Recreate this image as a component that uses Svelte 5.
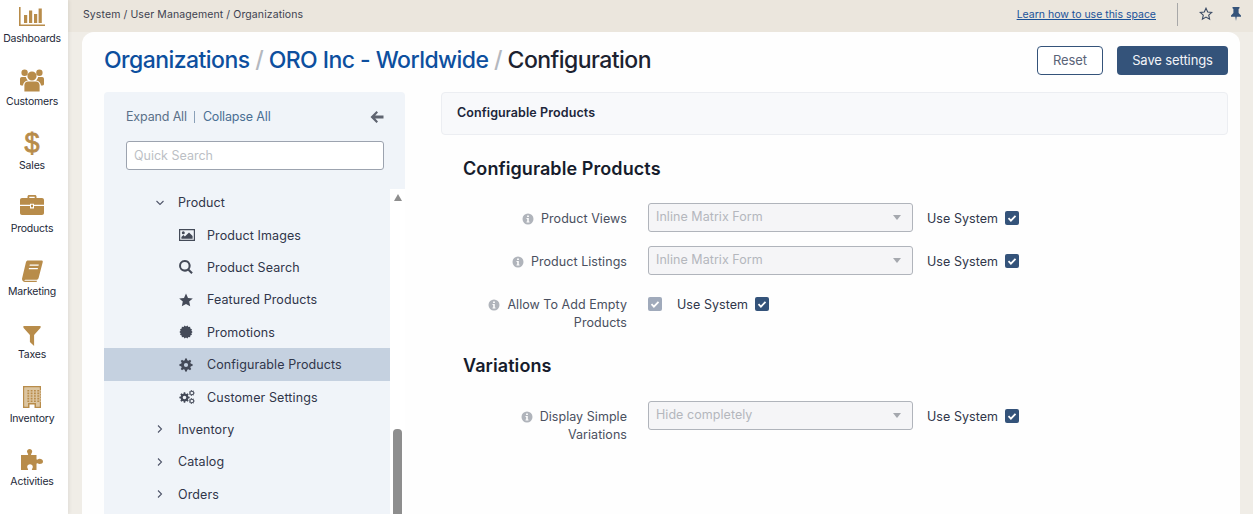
<script>
  function gear(cx, cy, r, n, hole) {
    const inner = r * 0.76;
    let d = '';
    for (let i = 0; i < n; i++) {
      const a = (i / n) * Math.PI * 2;
      const s = Math.PI / n;
      const pts = [[inner, a - s * 0.62], [r, a - s * 0.36], [r, a + s * 0.36], [inner, a + s * 0.62]];
      for (const [rad, ang] of pts) {
        d += (d === '' ? 'M' : 'L') + (cx + rad * Math.cos(ang)).toFixed(2) + ' ' + (cy + rad * Math.sin(ang)).toFixed(2);
      }
    }
    d += 'Z';
    d += `M${cx - hole} ${cy}a${hole} ${hole} 0 1 0 ${hole * 2} 0a${hole} ${hole} 0 1 0 ${-hole * 2} 0Z`;
    return d;
  }

  function burst(cx, cy, r, n) {
    let d = '';
    for (let i = 0; i < n * 2; i++) {
      const a = (i / (n * 2)) * Math.PI * 2;
      const rad = i % 2 ? r * 0.84 : r;
      d += (i ? 'L' : 'M') + (cx + rad * Math.cos(a)).toFixed(2) + ' ' + (cy + rad * Math.sin(a)).toFixed(2);
    }
    return d + 'Z';
  }

  let windows = '';
  for (let y = 4; y < 15; y += 2.6) {
    for (let x = 4.4; x < 18; x += 3.3) {
      windows += `M${x} ${y}h1.8v1.6h-1.8Z`;
    }
  }

  const nav = [
    { label: 'Dashboards', w: 26, h: 20, box: '0 0 26 20', d: 'M0 0h1.6v17.6H26V19H0ZM5 8h3.2v8H5ZM10 3.5h3.2V16H10ZM15 7h3.2v9H15ZM19.6 1.5h3.2V16h-3.2Z' },
    { label: 'Customers', w: 24, h: 24, box: '0 0 24 24', d: 'M12 3.4a4.6 4.6 0 1 1 0 9.2a4.6 4.6 0 0 1 0-9.2ZM4.6 1.6a3.2 3.2 0 1 1 0 6.4a3.2 3.2 0 0 1 0-6.4ZM19.4 1.6a3.2 3.2 0 1 1 0 6.4a3.2 3.2 0 0 1 0-6.4ZM8 13.4h8c2 0 3.6 1.6 3.6 3.8v6.3H4.400V17.200C4.400 15 6 13.400 8 13.400ZM1.800 9h4.100c.3 1.500 1 2.700 2 3.400c-3 .4-4.700 2.600-4.900 5H1.400C.4 17.400 0 16.800 0 16V11c0-1.200.8-2 1.800-2ZM18.100 9h4.100c1 0 1.800.8 1.800 2v5c0 .8-.4 1.400-1.400 1.400H21c-.2-2.400-1.900-4.600-4.900-5c1-.7 1.700-1.900 2-3.400Z' },
    { label: 'Sales', glyph: '$' },
    { label: 'Products', w: 24, h: 20, box: '0 0 24 20', d: 'M7.500 3V1.600C7.500.7 8.200 0 9.100 0h5.800c.9 0 1.600.7 1.600 1.600V3H22c1.100 0 2 .9 2 2v4.800H14v-1h-4v1H0V5c0-1.100.9-2 2-2ZM9.300 1.700V3h5.400V1.700ZM0 11h10v2.400h4V11h10v7c0 1.100-.9 2-2 2H2c-1.100 0-2-.9-2-2ZM11 9.800h2v2.500h-2Z' },
    { label: 'Marketing', w: 21, h: 22, box: '0 0 21 22', d: 'M6 .4H19.500C20.600.4 21 1.200 20.700 2.200L16.600 18c-.3 1.200-1.200 1.800-2.200 1.800H3.500C2.600 19.800 2.200 20.300 2.600 20.800H15L14.600 22H3C1 22-.5 20.300.2 18L4 2C4.300 1 5 .4 6 .4ZM7.800 4.500L7.500 5.800H16.500L16.800 4.500ZM7 8L6.700 9.300H15.700L16 8Z' },
    { label: 'Taxes', w: 18, h: 20, box: '0 0 18 21', d: 'M0 0H18V1.800L11.200 9.500V21L6.800 16.800V9.500L0 1.800Z' },
    { label: 'Inventory', w: 18, h: 22, box: '0 0 18 22', d: 'M0 0H18V22H11.500V18.500H6.500V22H0ZM1.400 1.400V20.600H5V17H13V20.600H16.600V1.400Z' + windows, d2: 'M1.400 1.400H16.600V20.600H13V17H5V20.600H1.400Z' },
    { label: 'Activities', w: 22, h: 21, box: '0 0 22 21', d: 'M0 6H6.500C7 6 7.400 5.500 7 4.900C6.400 3.900 6 3.300 6 2.500C6 1 7.200 0 8.600 0S11.200 1 11.200 2.500C11.200 3.300 10.800 3.900 10.200 4.900C9.800 5.500 10.200 6 10.700 6H15.500V10C15.500 10.600 16 10.900 16.600 10.600C17.300 10.100 17.800 9.800 18.600 9.800C20.400 9.800 22 10.700 22 12.500S20.400 15 18.600 15C17.800 15 17.300 14.700 16.600 14.300C16 14 15.500 14.300 15.500 14.900V21H11.500C11 21 10.700 20.500 11 20C11.500 19.300 11.800 18.600 11.800 17.900C11.800 16.300 10.500 15.300 9 15.300S6.200 16.300 6.200 17.900C6.200 18.600 6.500 19.300 7 20C7.300 20.500 7 21 6.500 21H0Z' }
  ];

  const tree = [
    { label: 'Product Images', box: '0 0 16 14', d: 'M0 1h16v12H0ZM1.200 2.200v9.600h13.600V2.200ZM4.300 3.300a1.500 1.500 0 1 1 0 3a1.500 1.500 0 0 1 0-3ZM2.400 10.700V9l2-2l1.500 1.500L10 4.500l3.600 3.600v2.600Z' },
    { label: 'Product Search', box: '0 0 14 14', d: 'M5.800 0a5.800 5.800 0 0 1 4.700 9.200l3.300 3.300l-1.500 1.500l-3.300-3.300A5.800 5.800 0 1 1 5.800 0ZM5.800 2a3.800 3.800 0 1 0 0 7.600a3.800 3.800 0 0 0 0-7.600Z' },
    { label: 'Featured Products', box: '0 0 14 14', d: 'M7 .5L9 4.900L13.800 5.400L10.200 8.600L11.200 13.300L7 10.900L2.800 13.300L3.800 8.600L.2 5.400L5 4.900Z' },
    { label: 'Promotions', box: '0 0 14 14', d: burst(7, 7, 6.6, 14) },
    { label: 'Configurable Products', active: true, box: '0 0 14 14', d: gear(7, 7, 6.6, 8, 2.100) },
    { label: 'Customer Settings', box: '0 0 16 14', d: gear(5.500, 7.500, 5.200, 8, 1.800) + gear(12.800, 3, 2.900, 7, 1.300) + gear(12.800, 11, 2.900, 7, 1.300) }
  ];

  const below = ['Inventory', 'Catalog', 'Orders'];
</script>

{#snippet check(muted)}
  <span class="check" class:muted>
    <svg viewBox="0 0 14 14" width="14" height="14" aria-hidden="true"><path d="M3.500 7.200l2.400 2.400l4.600-4.700" /></svg>
  </span>
{/snippet}

{#snippet info()}
  <svg class="info" viewBox="0 0 12 12" width="12" height="12" aria-hidden="true">
    <path fill-rule="evenodd" d="M6 .5a5.500 5.500 0 1 1 0 11a5.500 5.500 0 0 1 0-11ZM5.100 2.500v1.600h1.800V2.500ZM4.500 5v1h.7v2.500h-.7v1h3v-1h-.7V5Z" />
  </svg>
{/snippet}

{#snippet select(value)}
  <div class="select">
    <span>{value}</span>
    <i class="caret"></i>
  </div>
{/snippet}

{#snippet chevron(open)}
  <svg class="chev" class:open viewBox="0 0 10 10" width="10" height="10" aria-hidden="true"><path d="M3 1.500L6.500 5L3 8.500" /></svg>
{/snippet}

<div class="page">
  <aside class="rail">
    {#each nav as item}
      <div class="rail-item">
        <div class="rail-icon">
          {#if item.glyph}
            <span class="dollar">{item.glyph}</span>
          {:else}
            <svg viewBox={item.box} width={item.w} height={item.h} aria-hidden="true">
              {#if item.d2}<path class="soft" d={item.d2} />{/if}
              <path fill-rule="evenodd" d={item.d} />
            </svg>
          {/if}
        </div>
        <span>{item.label}</span>
      </div>
    {/each}
  </aside>

  <div class="main">
    <header class="topbar">
      <span class="crumbs">System / User Management / Organizations</span>
      <a class="learn" href="#learn">Learn how to use this space</a>
      <i class="divider"></i>
      <svg class="star" viewBox="0 0 14 14" width="14" height="14" aria-hidden="true"><path d="M7 1.200L8.700 5L12.800 5.400L9.700 8.100L10.600 12.200L7 10.100L3.400 12.200L4.300 8.100L1.200 5.400L5.300 5Z" /></svg>
      <svg class="pin" viewBox="0 0 12 14" width="12" height="14" aria-hidden="true"><path d="M2.500 0h7v1.200L8.600 2v4l2.400 2.600V9.800H6.700L6 14L5.300 9.800H1V8.600L3.400 6V2L2.500 1.200Z" /></svg>
    </header>

    <section class="card">
      <div class="title-row">
        <h1><a href="#o">Organizations</a> <em>/</em> <a href="#w">ORO Inc - Worldwide</a> <em>/</em> Configuration</h1>
        <button class="btn ghost">Reset</button>
        <button class="btn solid">Save settings</button>
      </div>

      <div class="columns">
        <div class="panel">
          <div class="panel-head">
            <div class="toggles">
              <span>Expand All</span><i></i><span>Collapse All</span>
              <svg class="back" viewBox="0 0 14 12" width="14" height="12" aria-hidden="true"><path d="M6.500 0L8 1.500L5.200 4.400H13.500V7.600H5.200L8 10.500L6.500 12L.5 6Z" /></svg>
            </div>
            <div class="search">Quick Search</div>
          </div>
          <div class="tree-wrap">
            <div class="tree">
              <div class="branch first">{@render chevron(true)}<span>Product</span></div>
              {#each tree as leaf}
                <div class="leaf" class:active={leaf.active}>
                  <span class="leaf-icon"><svg viewBox={leaf.box} height="14" aria-hidden="true"><path fill-rule="evenodd" d={leaf.d} /></svg></span>
                  <span>{leaf.label}</span>
                </div>
              {/each}
              {#each below as name}
                <div class="branch">{@render chevron(false)}<span>{name}</span></div>
              {/each}
            </div>
            <div class="scrollbar">
              <i class="arrow"></i>
              <i class="thumb"></i>
            </div>
          </div>
        </div>

        <div class="content">
          <div class="section-bar">Configurable Products</div>
          <h2 class="first">Configurable Products</h2>

          <div class="row">
            <label>{@render info()}Product Views</label>
            {@render select('Inline Matrix Form')}
            <span class="use">Use System</span>{@render check(false)}
          </div>
          <div class="row">
            <label>{@render info()}Product Listings</label>
            {@render select('Inline Matrix Form')}
            <span class="use">Use System</span>{@render check(false)}
          </div>
          <div class="row tall">
            <label>{@render info()}Allow To Add Empty Products</label>
            <span class="inline-check">{@render check(true)}</span>
            <span class="use">Use System</span>{@render check(false)}
          </div>

          <h2 class="second">Variations</h2>
          <div class="row">
            <label>{@render info()}Display Simple Variations</label>
            {@render select('Hide completely')}
            <span class="use">Use System</span>{@render check(false)}
          </div>
        </div>
      </div>
    </section>
  </div>
</div>

<style>
  :global(body) {
    margin: 0;
    background: #ede8e0;
    font-family: Inter, "Open Sans", sans-serif;
    overflow: hidden;
  }
  .page {
    display: flex;
    height: 514px;
    width: 1253px;
    overflow: hidden;
    background: #f0ede7;
  }
  .rail {
    width: 68px;
    flex: none;
    background: #fff;
    box-shadow: 1px 0 4px rgba(0, 0, 0, 0.08);
    padding-top: 5px;
    box-sizing: border-box;
    z-index: 1;
  }
  .rail-item {
    height: 63.3px;
    display: flex;
    flex-direction: column;
    align-items: center;
    font-size: 10.5px;
    letter-spacing: -0.2px;
    color: #232838;
    margin-left: -4px;
  }
  .rail-icon {
    height: 25px;
    margin-bottom: 2px;
    display: flex;
    align-items: center;
    justify-content: center;
    fill: #b88c4a;
  }
  .rail-icon svg {
    display: block;
  }
  .rail-icon .soft {
    fill: #dcc5a0;
  }
  .rail-item:nth-child(1) .rail-icon svg,
  .rail-item:nth-child(2) .rail-icon svg {
    margin-bottom: 2px;
  }
  .rail-item:nth-child(3) .dollar {
    margin-bottom: 2px;
  }
  .rail-item:nth-child(4) .rail-icon svg {
    margin-bottom: 4px;
  }
  .rail-item:nth-child(6) .rail-icon svg {
    margin-top: 4px;
  }
  .rail-item:nth-child(8) .rail-icon svg {
    margin-bottom: 3px;
  }
  .dollar {
    font-family: "Liberation Sans", sans-serif;
    font-weight: 400;
    -webkit-text-stroke: 0.8px #b88c4a;
    font-size: 27px;
    line-height: 25px;
    color: #b88c4a;
  }
  .main {
    flex: 1;
    min-width: 0;
    display: flex;
    flex-direction: column;
  }
  .topbar {
    height: 32px;
    flex: none;
    display: flex;
    align-items: center;
    padding: 0 11px 4px 15px;
    box-sizing: border-box;
    background: #ebe6dd;
    font-size: 10.500px;
    color: #3d4250;
  }
  .crumbs {
    flex: 1;
    letter-spacing: 0.1px;
  }
  .learn {
    color: #1a5299;
    text-decoration: underline;
    font-size: 10.500px;
    letter-spacing: 0;
  }
  .divider {
    width: 1px;
    height: 23px;
    background: #a8a8a8;
    margin: 0 21px 0 21px;
  }
  .star {
    fill: none;
    stroke: #3a4a64;
    stroke-width: 1.100;
    margin-right: 17px;
  }
  .pin {
    fill: #34537a;
  }
  .card {
    flex: 1;
    margin: 0 13px 0 14px;
    background: #fefefe;
    border-radius: 12px 12px 0 0;
    padding: 0 12px 0 22px;
    min-height: 0;
    display: flex;
    flex-direction: column;
  }
  .title-row {
    height: 60px;
    flex: none;
    display: flex;
    align-items: center;
    padding-bottom: 3px;
    box-sizing: border-box;
  }
  h1 {
    flex: 1;
    margin: 0 0 2px;
    font-size: 23px;
    font-weight: 500;
    letter-spacing: -0.55px;
    color: #1c2230;
  }
  h1 a {
    color: #0d4f9e;
    text-decoration: none;
  }
  h1 em {
    font-style: normal;
    color: #b4b8bf;
  }
  .btn {
    height: 29px;
    border-radius: 4px;
    font: inherit;
    font-size: 13px;
    letter-spacing: -0.1px;
    box-sizing: border-box;
    padding: 0 0 2px;
  }
  .ghost {
    width: 66px;
    background: #fff;
    border: 1px solid #34537a;
    color: #5a6478;
    margin-right: 14px;
  }
  .solid {
    width: 111px;
    background: #34537a;
    border: 0;
    color: #f2f4f8;
  }
  .columns {
    flex: 1;
    min-height: 0;
    display: flex;
    gap: 36px;
  }
  .panel {
    width: 301px;
    flex: none;
    display: flex;
    flex-direction: column;
  }
  .panel-head {
    background: #f0f4f9;
    border-radius: 4px 4px 0 0;
    height: 97px;
    flex: none;
    padding: 0 21px 0 22px;
    box-sizing: border-box;
  }
  .toggles {
    height: 49px;
    display: flex;
    align-items: center;
    font-size: 12.500px;
    letter-spacing: -0.15px;
    color: #4a6f94;
  }
  .toggles i {
    width: 1px;
    height: 12px;
    background: #8aa0b8;
    margin: 0 8px 0 7px;
  }
  .toggles span:first-child {
    color: #5a7088;
  }
  .back {
    margin-left: auto;
    fill: #5f6470;
  }
  .search {
    height: 29px;
    box-sizing: border-box;
    background: #fff;
    border: 1px solid #9ca3af;
    border-radius: 3px;
    padding-left: 7px;
    font-size: 12.500px;
    line-height: 27px;
    color: #bcbfc5;
  }
  .tree-wrap {
    flex: 1;
    min-height: 0;
    display: flex;
    overflow: hidden;
  }
  .tree {
    flex: 1;
    background: #f0f4f9;
    font-size: 12.500px;
    letter-spacing: 0.1px;
    color: #30364a;
    overflow: hidden;
  }
  .branch,
  .leaf {
    height: 32.4px;
    display: flex;
    align-items: center;
  }
  .branch {
    padding-left: 51px;
    gap: 13px;
  }
  .branch.first {
    margin-top: -2.5px;
  }
  .leaf {
    padding-left: 75px;
  }
  .leaf.active {
    background: #c5d1e0;
  }
  .leaf-icon {
    width: 28px;
    display: flex;
    fill: #444a58;
  }
  .leaf-icon svg {
    display: block;
  }
  .chev {
    fill: none;
    stroke: #50566a;
    stroke-width: 1.100;
  }
  .chev.open {
    transform: rotate(90deg);
  }
  .scrollbar {
    width: 15px;
    flex: none;
    background: #fff;
    display: flex;
    flex-direction: column;
    align-items: center;
  }
  .arrow {
    width: 0;
    height: 0;
    border-left: 4.500px solid transparent;
    border-right: 4.500px solid transparent;
    border-bottom: 7px solid #8e8e8e;
    margin-top: 5px;
  }
  .thumb {
    width: 9px;
    flex: 1;
    margin-top: 228px;
    background: #8e8e8e;
    border-radius: 4px 4px 0 0;
  }
  .content {
    flex: 1;
    min-width: 0;
  }
  .section-bar {
    height: 43px;
    box-sizing: border-box;
    border: 1px solid #eceef2;
    border-radius: 4px;
    background: #f8f9fb;
    padding-left: 15px;
    font-size: 12.500px;
    font-weight: 600;
    letter-spacing: 0.1px;
    line-height: 40px;
    color: #20263a;
  }
  h2 {
    margin: 0 0 0 22px;
    font-size: 18px;
    font-weight: 600;
    letter-spacing: 0.08px;
    line-height: 24px;
    color: #161c2c;
  }
  h2.first {
    margin-top: 22px;
    margin-bottom: 22px;
  }
  h2.second {
    margin-top: 16px;
    margin-bottom: 23px;
  }
  .row {
    display: flex;
    align-items: flex-start;
    min-height: 43px;
    font-size: 12.500px;
    letter-spacing: 0.05px;
    color: #4a5060;
  }
  .row.tall {
    min-height: 49px;
  }
  label {
    width: 186px;
    flex: none;
    text-align: right;
    line-height: 18px;
    padding-top: 7px;
    box-sizing: border-box;
    margin-right: 21px;
    padding-left: 40px;
  }
  .info {
    fill: #b0b4bb;
    vertical-align: -2px;
    margin-right: 7px;
  }
  .select {
    width: 265px;
    height: 29px;
    box-sizing: border-box;
    border: 1px solid #b0b4bb;
    border-radius: 3px;
    background: #f5f5f7;
    display: flex;
    align-items: center;
    justify-content: space-between;
    padding: 0 11px 2px 7px;
    color: #b4b7bd;
    margin-right: 14px;
  }
  .caret {
    width: 0;
    height: 0;
    border-left: 4px solid transparent;
    border-right: 4px solid transparent;
    border-top: 5px solid #a5a8ae;
    margin-top: 2px;
  }
  .use {
    color: #30364a;
    line-height: 18px;
    padding-top: 7px;
    margin-right: 7px;
  }
  .check {
    width: 14px;
    height: 14px;
    margin-top: 8px;
    border-radius: 2px;
    background: #34537a;
    display: block;
    flex: none;
  }
  .check.muted {
    background: #a0aabb;
  }
  .check svg {
    display: block;
    fill: none;
    stroke: #fff;
    stroke-width: 1.800;
  }
  .inline-check {
    width: 29px;
    flex: none;
  }
</style>
